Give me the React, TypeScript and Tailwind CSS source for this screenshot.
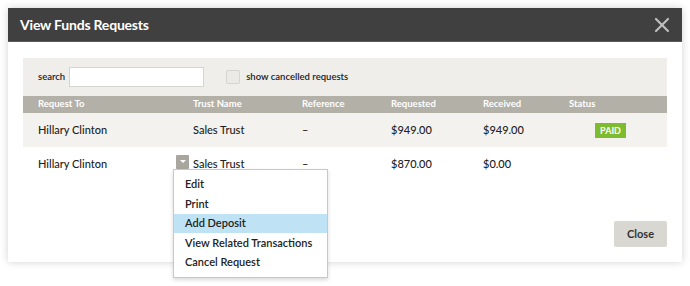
import { X } from "lucide-react";

const rows = [
  { to: "Hillary Clinton", trust: "Sales Trust", ref: "–", requested: "$949.00", received: "$949.00", status: "PAID" },
  { to: "Hillary Clinton", trust: "Sales Trust", ref: "–", requested: "$870.00", received: "$0.00", status: "" },
];

const menuItems = ["Edit", "Print", "Add Deposit", "View Related Transactions", "Cancel Request"];

const cols = "grid grid-cols-[155px_109px_89px_92px_86px_1fr]";

export default function App() {
  return (
    <div className="w-[690px] h-[286px] bg-white pt-2 px-2 font-['Lato','Open_Sans',sans-serif] text-[#222]">
      <div className="w-[674px] h-[254px] bg-white shadow-[0_0_8px_rgba(0,0,0,0.18)] flex flex-col">
        {/* header */}
        <div className="h-[34px] bg-[#404040] border-b border-[#5a5a5a] flex items-center justify-between pl-3 pr-2">
          <span className="text-white text-[14px] font-bold tracking-[-0.2px]">View Funds Requests</span>
          <X className="w-6 h-6 text-[#bdbdbd]" strokeWidth={2.2} />
        </div>

        <div className="px-[15px] pt-4 flex flex-col flex-1">
          {/* filters */}
          <div className="h-[38px] bg-[#efeeeb] flex items-center pl-[15px] text-[9.5px] font-semibold">
            <span>search</span>
            <input className="ml-1 w-[135px] h-[20px] bg-white border border-[#d5d4cf] outline-none" />
            <span className="ml-[22px] w-[14px] h-[14px] bg-[#eceae6] border border-[#d6d4cf] rounded-[2px]" />
            <span className="ml-[6px]">show cancelled requests</span>
          </div>

          {/* table header */}
          <div className={`${cols} h-[17px] bg-[#b3b0a8] items-center pl-[15px] text-[9.5px] font-bold text-white`}>
            <span>Request To</span>
            <span>Trust Name</span>
            <span>Reference</span>
            <span>Requested</span>
            <span>Received</span>
            <span>Status</span>
          </div>

          {rows.map((r, i) => (
            <div
              key={i}
              className={`${cols} h-[34px] items-center pl-[15px] text-[11px] font-medium ${i === 0 ? "bg-[#f3f2ee]" : "bg-white"}`}
            >
              <span>{r.to}</span>
              <span className="relative">
                {i === 1 && (
                  <>
                    <span className="absolute left-[-17px] top-[-1px] w-[13px] h-[14px] bg-[#a9a69e] rounded-[1px] flex items-center justify-center">
                      <span className="w-0 h-0 border-l-[3px] border-r-[3px] border-t-[3px] border-l-transparent border-r-transparent border-t-white" />
                    </span>
                    <div className="absolute left-[-20px] top-[13px] z-10 w-[155px] py-[5px] bg-white border border-[#c8c8c8] shadow-[0_2px_4px_rgba(0,0,0,0.15)] text-[11px] font-semibold">
                      {menuItems.map((m) => (
                        <div
                          key={m}
                          className={`h-[19.5px] flex items-center pl-[11px] ${m === "Add Deposit" ? "bg-[#bfe3f4]" : ""}`}
                        >
                          {m}
                        </div>
                      ))}
                    </div>
                  </>
                )}
                {r.trust}
              </span>
              <span>{r.ref}</span>
              <span>{r.requested}</span>
              <span>{r.received}</span>
              <span>
                {r.status && (
                  <span className="ml-[26px] inline-flex h-[15px] w-[31px] items-center justify-center bg-[#7dbb2f] text-white text-[9px] font-bold">
                    {r.status}
                  </span>
                )}
              </span>
            </div>
          ))}

          <div className="flex justify-end mt-[40px]">
            <button className="w-[53px] h-[26px] bg-[#d8d7d1] rounded-[2px] text-[11px] font-bold text-[#333]">Close</button>
          </div>
        </div>
      </div>
    </div>
  );
}
